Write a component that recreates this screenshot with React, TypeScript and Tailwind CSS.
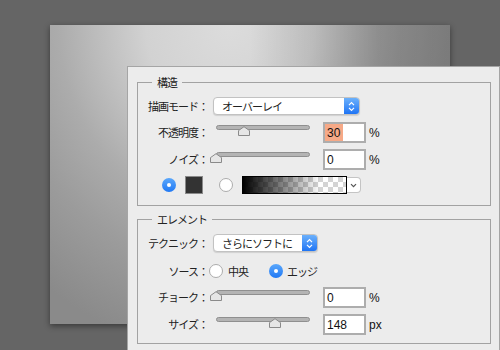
import React from 'react'

const jp = "font-['Noto_Sans_CJK_JP',sans-serif] text-[11px] tracking-[-1px] text-[#222]"
const num = "font-['Liberation_Sans',sans-serif] text-[12px] text-[#111]"

const Thumb = ({ x }: { x: number }) => (
  <svg
    className="absolute top-[4px]"
    style={{ left: x - 6 }}
    width="12"
    height="10"
    viewBox="0 0 12 10"
  >
    <path
      d="M0.5 9.5V4.6L6 0.7L11.5 4.6V9.5Z"
      fill="#e6e6e6"
      stroke="#8a8a8a"
      strokeLinejoin="round"
    />
  </svg>
)

const Slider = ({ pos }: { pos: number }) => (
  <div className="relative ml-[5px] h-full w-[100px]">
    <div className="ml-[3px] mt-[3px] h-[5px] w-[94px] rounded-full border border-[#8f8f8f] bg-[#b4b4b4]" />
    <Thumb x={pos} />
  </div>
)

const Radio = ({ on }: { on?: boolean }) =>
  on ? (
    <div className="flex h-[14px] w-[14px] shrink-0 items-center justify-center rounded-full bg-gradient-to-b from-[#5aa7fb] to-[#1f78f4]">
      <div className="h-[4px] w-[4px] rounded-full bg-white" />
    </div>
  ) : (
    <div className="h-[14px] w-[14px] shrink-0 rounded-full border border-[#acacac] bg-white" />
  )

const Select = ({ text, w }: { text: string; w: string }) => (
  <div
    className={`ml-[5px] flex h-[18px] ${w} items-center overflow-hidden rounded-[4px] border border-[#c2c2c2] bg-white shadow-[0_1px_1px_rgba(0,0,0,0.12)]`}
  >
    <span className={`flex-1 pl-[8px] ${jp}`}>{text}</span>
    <div className="flex h-full w-[15px] items-center justify-center bg-gradient-to-b from-[#6bb0fb] to-[#1e74f4]">
      <svg width="7" height="11" viewBox="0 0 7 11">
        <path d="M1 4.2L3.5 1.7L6 4.2M1 6.8L3.5 9.3L6 6.8" fill="none" stroke="#fff" strokeWidth="1.2" />
      </svg>
    </div>
  </div>
)

const Label = ({ children }: { children: React.ReactNode }) => (
  <div className={`w-[70px] shrink-0 text-right ${jp}`}>{children}</div>
)

const NumBox = ({ children }: { children: React.ReactNode }) => (
  <div className={`ml-[10px] flex h-[21px] w-[43px] items-stretch border-2 border-[#adadad] bg-white ${num}`}>
    {children}
  </div>
)

const SliderRow = ({
  label,
  pos,
  value,
  unit,
  className,
}: {
  label: string
  pos: number
  value: React.ReactNode
  unit: string
  className: string
}) => (
  <div className={`flex h-[21px] items-center ${className}`}>
    <Label>{label}</Label>
    <Slider pos={pos} />
    <NumBox>{value}</NumBox>
    <span className={`ml-[3px] ${num}`}>{unit}</span>
  </div>
)

const Legend = ({ children }: { children: React.ReactNode }) => (
  <legend className={`ml-[14px] block px-[5px] leading-[16px] ${jp}`}>{children}</legend>
)

export default () => {
  return (
    <main className="relative h-[350px] w-[500px] overflow-hidden bg-[#656565]">
      {/* document canvas */}
      <div className="absolute left-[50px] top-[25px] h-[299px] w-[400px] shadow-[0_2px_6px_rgba(0,0,0,0.45)] [background-image:linear-gradient(to_right,rgba(0,0,0,0)_50%,rgba(0,0,0,0.22)_82%),radial-gradient(ellipse_300px_330px_at_180px_0px,#dcdcdc_0%,#d2d2d2_28%,#acacac_57%,#9c9c9c_75%,#8a8a8a_100%)]" />

      {/* layer style panel */}
      <div className="absolute left-[127px] top-[66px] h-[284px] w-[373px] border-x border-t border-[#a5a5a5] bg-[#ececec]">
        <fieldset className="ml-[9px] mt-[7px] w-[354px] border border-[#a2a2a2] pb-[11px] pt-[7px]">
          <Legend>構造</Legend>

          <div className="flex h-[18px] items-center">
            <Label>描画モード：</Label>
            <Select text="オーバーレイ" w="w-[147px]" />
          </div>

          <SliderRow
            className="mt-[7px]"
            label="不透明度："
            pos={31}
            unit="%"
            value={
              <span className="flex items-center bg-[#f6a987] pl-[2px] pr-[3px]">30</span>
            }
          />
          <SliderRow
            className="mt-[6px]"
            label="ノイズ："
            pos={3}
            unit="%"
            value={<span className="flex items-center pl-[2px]">0</span>}
          />

          <div className="mt-[6px] flex h-[18px] items-center">
            <div className="ml-[24px]">
              <Radio on />
            </div>
            <div className="ml-[9px] h-[18px] w-[18px] border border-[#8a8a8a] bg-[#333]" />
            <div className="ml-[16px]">
              <Radio />
            </div>
            <div className="ml-[9px] h-[18px] w-[105px] border border-black [background-image:linear-gradient(to_right,#000,rgba(0,0,0,0)_75%),repeating-conic-gradient(#d4d4d4_0%_25%,#fff_0%_50%)] [background-size:100%_100%,10px_10px]" />
            <div className="flex h-[16px] w-[14px] items-center justify-center rounded-r-[4px] border border-l-0 border-[#c4c4c4] bg-white">
              <svg width="7" height="5" viewBox="0 0 7 5">
                <path d="M1 1.2L3.5 3.7L6 1.2" fill="none" stroke="#555" strokeWidth="1.2" />
              </svg>
            </div>
          </div>
        </fieldset>

        <fieldset className="ml-[9px] mt-[5px] w-[354px] border border-[#a2a2a2] pb-[8px] pt-[7px]">
          <Legend>エレメント</Legend>

          <div className="flex h-[18px] items-center">
            <Label>テクニック：</Label>
            <Select text="さらにソフトに" w="w-[105px]" />
          </div>

          <div className="mt-[12px] flex h-[14px] items-center">
            <Label>ソース：</Label>
            <div className="ml-[1px]">
              <Radio />
            </div>
            <span className={`ml-[5px] ${jp}`}>中央</span>
            <div className="ml-[21px]">
              <Radio on />
            </div>
            <span className={`ml-[4px] ${jp}`}>エッジ</span>
          </div>

          <SliderRow
            className="mt-[9px]"
            label="チョーク："
            pos={3}
            unit="%"
            value={<span className="flex items-center pl-[2px]">0</span>}
          />
          <SliderRow
            className="mt-[6px]"
            label="サイズ："
            pos={62}
            unit="px"
            value={<span className="flex items-center pl-[2px]">148</span>}
          />
        </fieldset>
      </div>
    </main>
  )
}
